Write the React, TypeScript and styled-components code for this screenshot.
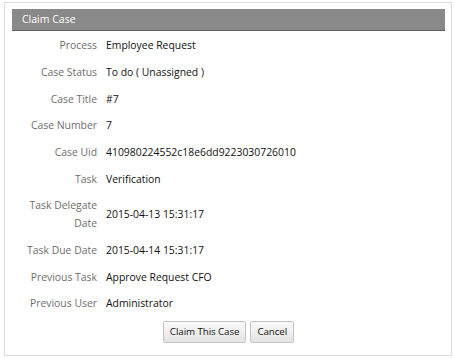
import React from "react";
import styled, { createGlobalStyle } from "styled-components";

const GlobalStyle = createGlobalStyle`
  body {
    margin: 0;
    background: #fff;
    font-family: "Open Sans", "DejaVu Sans", sans-serif;
  }
`;

const Frame = styled.div`
  box-sizing: border-box;
  margin: 2px 0 0 4px;
  width: 448px;
  height: 354px;
  border: 1px solid #dcdcdc;
  padding: 6px 6px 0 7px;
`;

const Header = styled.div`
  height: 21px;
  background: #898989;
  border-bottom: 1px solid #5e5e5e;
  color: #fff;
  font-size: 10.5px;
  line-height: 21px;
  padding-left: 10px;
`;

const Details = styled.div`
  display: grid;
  grid-template-columns: 85px 1fr;
  column-gap: 9px;
  padding-top: 1px;
  font-size: 10.4px;
  line-height: 18px;
`;

const Label = styled.div`
  color: #6e6e6e;
  text-align: right;
  padding: 4.33px 0;
`;

const Value = styled.div`
  color: #111;
  padding: 4.33px 0;
  display: flex;
  align-items: center;
`;

const Actions = styled.div`
  display: flex;
  justify-content: center;
  gap: 4px;
  margin-top: 4px;
`;

const Button = styled.button`
  height: 22px;
  padding: 0 6px;
  border: 1px solid #c4c4c4;
  border-radius: 2px;
  background: linear-gradient(#fafafa, #e4e4e4);
  font-family: "Open Sans", "DejaVu Sans", sans-serif;
  font-size: 9.8px;
  letter-spacing: -0.1px;
  color: #111;
`;

const rows: [string, string][] = [
  ["Process", "Employee Request"],
  ["Case Status", "To do ( Unassigned )"],
  ["Case Title", "#7"],
  ["Case Number", "7"],
  ["Case Uid", "410980224552c18e6dd9223030726010"],
  ["Task", "Verification"],
  ["Task Delegate Date", "2015-04-13 15:31:17"],
  ["Task Due Date", "2015-04-14 15:31:17"],
  ["Previous Task", "Approve Request CFO"],
  ["Previous User", "Administrator"],
];

export default function App() {
  return (
    <>
      <GlobalStyle />
      <Frame>
        <Header>Claim Case</Header>
        <Details>
          {rows.map(([label, value]) => (
            <React.Fragment key={label}>
              <Label>{label}</Label>
              <Value>{value}</Value>
            </React.Fragment>
          ))}
        </Details>
        <Actions>
          <Button>Claim This Case</Button>
          <Button>Cancel</Button>
        </Actions>
      </Frame>
    </>
  );
}
